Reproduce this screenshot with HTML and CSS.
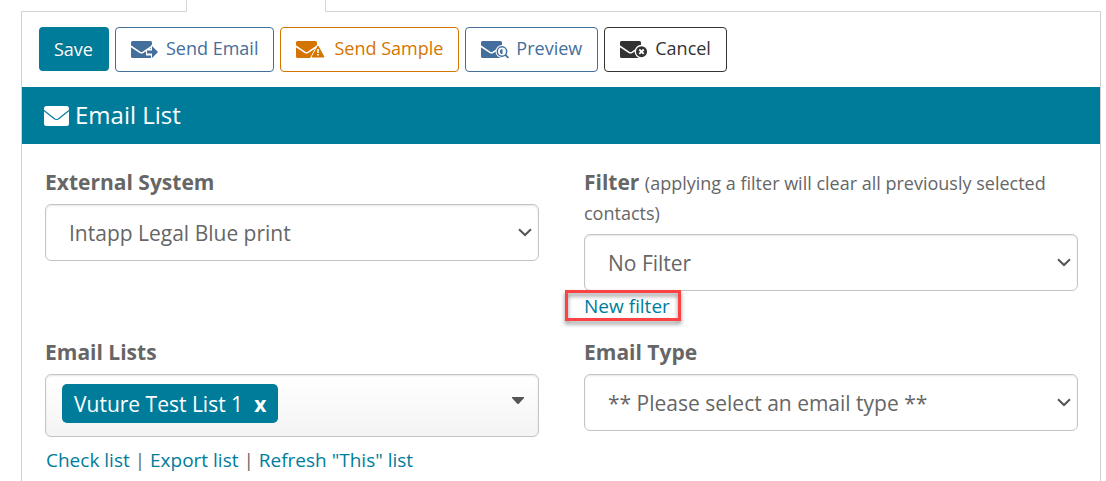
FILE: index.html
```html
<!DOCTYPE html>
<html lang="en">
<head>
<meta charset="utf-8">
<meta name="viewport" content="width=device-width, initial-scale=1">
<title>Email List</title>
<link rel="stylesheet" href="styles.css">
</head>
<body>
<main class="page">
  <div class="tabs">
    <span class="tab"></span>
    <span class="tab tab-active"></span>
    <span class="tab-rest"></span>
  </div>
  <section class="panel">
    <div class="toolbar">
      <button type="button" class="btn btn-save">Save</button>
      <button type="button" class="btn btn-blue">
        <svg class="mail-icon" viewBox="0 0 28 18" aria-hidden="true">
          <path fill="currentColor" d="M1.500 0H19.500a1.500 1.500 0 0 1 1.500 1.500V17H1.500A1.500 1.500 0 0 1 0 15.500V1.500A1.500 1.500 0 0 1 1.500 0z"/>
          <path fill="none" stroke="#fff" stroke-width="1.500" d="M-.5 5 9 11.300Q10.500 12.200 12 11.300L21.500 5"/>
          <path fill="#fff" d="M15 8h5V3.500l8 7.500-8 8v-4.500h-5z"/>
          <path fill="currentColor" d="M16 9.500h5V5l6 6-6 6v-4.500h-5z"/>
        </svg>
        <span>Send Email</span>
      </button>
      <button type="button" class="btn btn-orange">
        <svg class="mail-icon" viewBox="0 0 28 18" aria-hidden="true">
          <path fill="currentColor" d="M1.500 0H19.500a1.500 1.500 0 0 1 1.500 1.500V17H1.500A1.500 1.500 0 0 1 0 15.500V1.500A1.500 1.500 0 0 1 1.500 0z"/>
          <path fill="none" stroke="#fff" stroke-width="1.500" d="M-.5 5 9 11.300Q10.500 12.200 12 11.300L21.500 5"/>
          <path fill="#fff" d="M22 2 30 18H13.500z"/>
          <path fill="currentColor" stroke="currentColor" stroke-linejoin="round" d="M22 5 28 16H16z"/>
          <path fill="none" stroke="#fff" stroke-width="1.600" d="M22 8v4M22 13v1.600"/>
        </svg>
        <span>Send Sample</span>
      </button>
      <button type="button" class="btn btn-blue">
        <svg class="mail-icon" viewBox="0 0 28 18" aria-hidden="true">
          <path fill="currentColor" d="M1.500 0H19.500a1.500 1.500 0 0 1 1.500 1.500V17H1.500A1.500 1.500 0 0 1 0 15.500V1.500A1.500 1.500 0 0 1 1.500 0z"/>
          <path fill="none" stroke="#fff" stroke-width="1.500" d="M-.5 5 9 11.300Q10.500 12.200 12 11.300L21.500 5"/>
          <circle cx="21" cy="10.500" r="6.500" fill="#fff"/>
          <circle cx="21" cy="10.500" r="4.700" fill="#fff" stroke="currentColor" stroke-width="1.500"/>
          <path fill="currentColor" d="M21.500 8v5.200a2.600 2.600 0 0 1 0-5.200z"/>
          <path fill="none" stroke="currentColor" stroke-width="1.800" d="M24.300 13.800 27.500 16.800"/>
        </svg>
        <span>Preview</span>
      </button>
      <button type="button" class="btn btn-dark">
        <svg class="mail-icon" viewBox="0 0 28 18" aria-hidden="true">
          <path fill="currentColor" d="M1.500 0H19.500a1.500 1.500 0 0 1 1.500 1.500V17H1.500A1.500 1.500 0 0 1 0 15.500V1.500A1.500 1.500 0 0 1 1.500 0z"/>
          <path fill="none" stroke="#fff" stroke-width="1.500" d="M-.5 5 9 11.300Q10.500 12.200 12 11.300L21.500 5"/>
          <circle cx="21.500" cy="10.700" r="6.200" fill="currentColor" stroke="#fff" stroke-width="1.300"/>
          <path fill="none" stroke="#fff" stroke-width="1.800" d="m19.300 8.500 4.400 4.400m0-4.400-4.400 4.400"/>
        </svg>
        <span>Cancel</span>
      </button>
    </div>

    <h1 class="panel-title">
      <svg class="title-icon" viewBox="0 0 25 20" aria-hidden="true">
        <rect width="25" height="20" rx="2.500" fill="#fff"/>
        <path fill="none" stroke="#007c9b" stroke-width="1.200" d="M0 4.500 10 12.500Q12.500 14.500 15 12.500L25 4.500"/>
      </svg>
      <span>Email List</span>
    </h1>

    <form class="fields">
      <div class="field">
        <label class="label" for="system">External System</label>
        <div class="select-wrap">
          <select id="system" class="select"><option>Intapp Legal Blue print</option></select>
          <svg class="chevron" viewBox="0 0 14 9" aria-hidden="true"><path d="M1 1.200 7 7 13 1.200"/></svg>
        </div>
      </div>
      <div class="field">
        <label class="label" for="filter">Filter <span class="hint">(applying a filter will clear all previously selected contacts)</span></label>
        <div class="select-wrap">
          <select id="filter" class="select"><option>No Filter</option></select>
          <svg class="chevron" viewBox="0 0 14 9" aria-hidden="true"><path d="M1 1.200 7 7 13 1.200"/></svg>
        </div>
        <a class="link new-filter" href="#">New filter</a>
      </div>
      <div class="field">
        <span class="label" id="lists-label">Email Lists</span>
        <div class="picker" role="group" aria-labelledby="lists-label">
          <span class="chip">Vuture Test List 1<button type="button" class="chip-remove" aria-label="Remove Vuture Test List 1">x</button></span>
          <button type="button" class="picker-toggle" aria-label="Show lists">
            <svg class="caret" viewBox="0 0 12 7" aria-hidden="true"><path fill="#555" d="M0 0h12v1L6.500 7h-1L0 1z"/></svg>
          </button>
        </div>
        <div class="links">
          <a class="link" href="#">Check list</a> | <a class="link" href="#">Export list</a> | <a class="link" href="#">Refresh "This" list</a>
        </div>
      </div>
      <div class="field">
        <label class="label" for="type">Email Type</label>
        <div class="select-wrap">
          <select id="type" class="select"><option>** Please select an email type **</option></select>
          <svg class="chevron" viewBox="0 0 14 9" aria-hidden="true"><path d="M1 1.200 7 7 13 1.200"/></svg>
        </div>
      </div>
    </form>
  </section>
</main>
</body>
</html>
```
FILE: styles.css
```css
* {
  box-sizing: border-box;
}

body {
  margin: 0;
  background: #fff;
  color: #666;
  font-family: "Open Sans", "Noto Sans", sans-serif;
  font-size: 18px;
  line-height: 30px;
}

button,
select {
  font: inherit;
  color: inherit;
}

.page {
  min-height: 100vh;
  display: flex;
  flex-direction: column;
  padding: 0 5px 0 21px;
}

.tabs {
  display: flex;
  height: 12px;
}

.tab {
  width: 165px;
  border-bottom: 1px solid #d6d6d6;
}

.tab-active {
  width: 140px;
  border: solid #d6d6d6;
  border-width: 0 1px;
}

.tab-rest {
  flex: 1;
  border-bottom: 1px solid #d6d6d6;
}

.panel {
  flex: 1;
  border: solid #d0d0d0;
  border-width: 0 1px;
}

.toolbar {
  display: flex;
  flex-wrap: wrap;
  gap: 6px;
  padding: 15px 17px;
}

.btn {
  display: flex;
  align-items: center;
  gap: 7px;
  height: 45px;
  padding: 0 15px 4px;
  border: 1px solid;
  border-radius: 4px;
  background: #fff;
  cursor: pointer;
}

.btn-save {
  height: 44px;
  padding: 0 16px 0 15px;
  border: 0;
  background: #007c9b;
  color: #fff;
  text-shadow: 0 -1px 0 rgba(0, 0, 0, 0.25);
}

.btn-blue {
  color: #446e9b;
}

.btn-orange {
  gap: 10px;
  color: #d47500;
}

.btn-dark {
  color: #333;
}

.mail-icon {
  width: 28px;
  height: 18px;
  margin-top: 4px;
  overflow: visible;
}

.panel-title {
  display: flex;
  align-items: center;
  gap: 6px;
  height: 57px;
  margin: 0;
  padding: 0 22px 2px;
  background: #007c9b;
  color: #fff;
  font-size: 24px;
  font-weight: 400;
}

.title-icon {
  width: 25px;
  height: 20px;
  margin-top: 2px;
}

.fields {
  display: grid;
  grid-template-columns: 1fr 1fr;
  gap: 16px 45px;
  padding: 23px 22px 0 23px;
}

.label {
  display: block;
  margin-bottom: 7px;
  font-size: 21px;
  font-weight: 700;
}

.hint {
  font-size: 18px;
  font-weight: 400;
  line-height: 24px;
}

.select-wrap {
  display: grid;
  align-items: center;
}

.select,
.chevron {
  grid-area: 1 / 1;
}

.select {
  appearance: none;
  width: 100%;
  height: 57px;
  padding: 0 23px;
  border: 1px solid #c4c4c4;
  border-radius: 6px;
  background: #fff;
  box-shadow: inset 0 1px 2px rgba(0, 0, 0, 0.1);
  font-size: 21px;
}

.chevron {
  justify-self: end;
  width: 14px;
  height: 9px;
  margin-right: 7px;
  fill: none;
  stroke: #555;
  stroke-width: 2;
  pointer-events: none;
}

.link {
  color: #007c9b;
  font-size: 19px;
  text-decoration: none;
}

.new-filter {
  position: relative;
  display: block;
  width: fit-content;
}

.new-filter::after {
  content: "";
  position: absolute;
  inset: -1px -11px 0 -19px;
  border: 3px solid #fc4343;
  filter: drop-shadow(0 3px 2px rgba(0, 0, 0, 0.45));
  pointer-events: none;
}

.picker {
  display: flex;
  justify-content: space-between;
  align-items: center;
  height: 63px;
  padding: 0 14px 4px 16px;
  border: 1px solid #c4c4c4;
  border-radius: 6px;
  background: linear-gradient(#fff, #f4f4f4);
  box-shadow: inset 0 1px 2px rgba(0, 0, 0, 0.1);
}

.chip {
  display: flex;
  align-items: center;
  gap: 11px;
  height: 39px;
  padding: 0 12px;
  border-radius: 5px;
  background: #007c9b;
  color: #fff;
  font-size: 21px;
}

.chip-remove {
  padding: 0;
  border: 0;
  background: none;
  font-weight: 700;
  cursor: pointer;
}

.picker-toggle {
  display: flex;
  padding: 0 0 7px;
  border: 0;
  background: none;
  cursor: pointer;
}

.caret {
  width: 12px;
  height: 7px;
}

.links {
  padding: 8px 1px;
  font-size: 19px;
}
```
